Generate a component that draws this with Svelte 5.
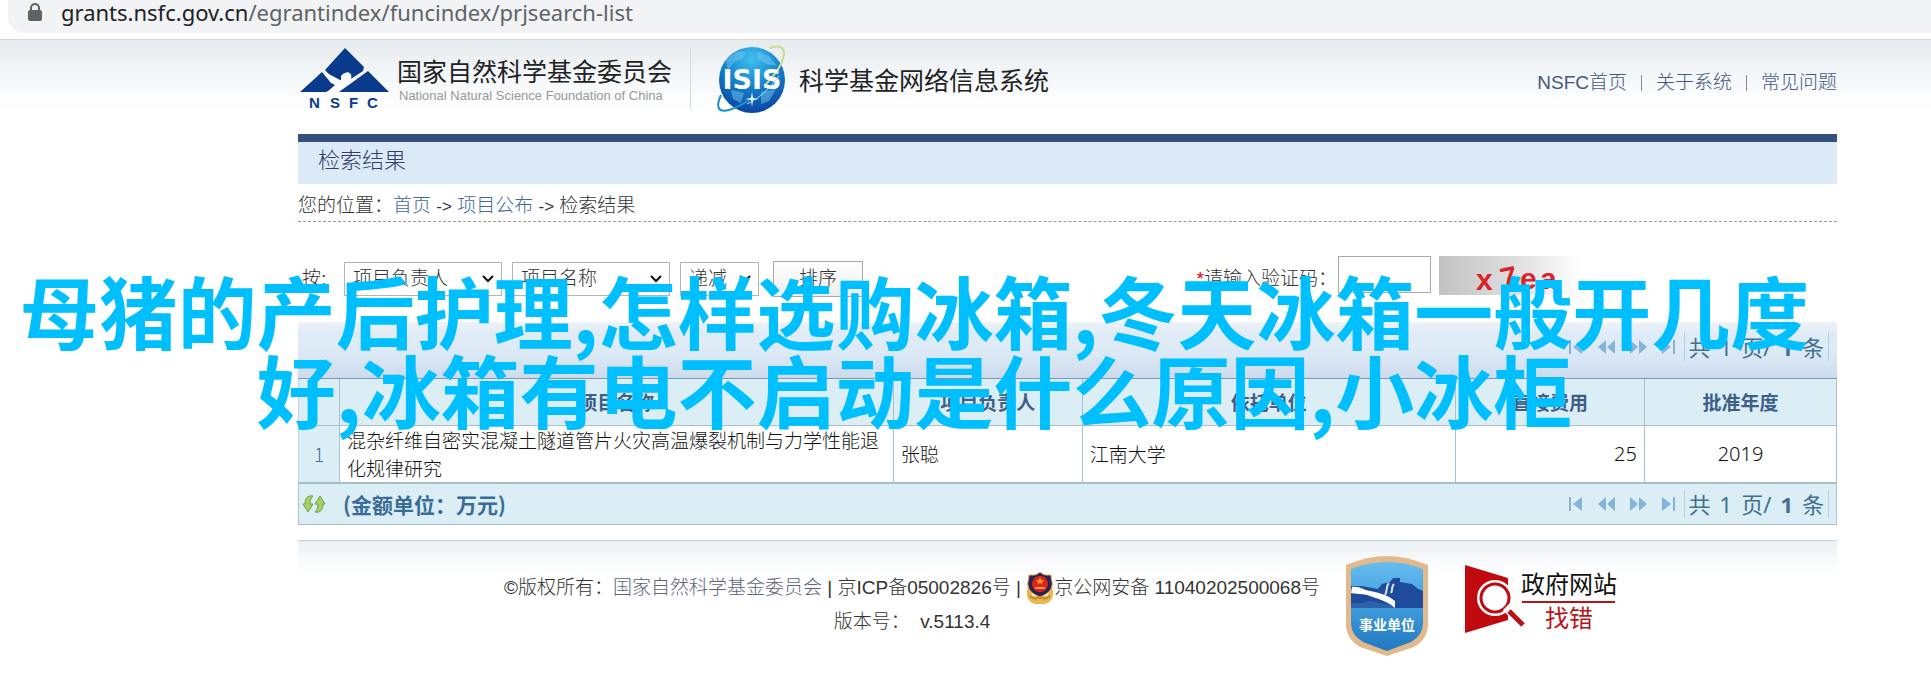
<script>
  const sortFields = ['项目负责人', '申请代码', '批准年度'];
  const nameFields = ['项目名称', '依托单位'];
  const orders = ['递减', '递增'];
  const columns = ['项目名称', '项目负责人', '依托单位', '直接费用', '批准年度'];
  const rows = [
    {
      name: '混杂纤维自密实混凝土隧道管片火灾高温爆裂机制与力学性能退化规律研究',
      leader: '张聪',
      org: '江南大学',
      cost: 25,
      year: 2019
    }
  ];
</script>

{#snippet chevron()}
  <svg class="chevron" viewBox="0 0 14 10" aria-hidden="true"><path d="M2 2l5 5 5-5" /></svg>
{/snippet}

{#snippet pager()}
  <div class="pager">
    <button aria-label="第一页"><svg width="14" height="14" viewBox="0 0 14 14"><path d="M0 0h2v14H0zM13 0v14L4 7z" /></svg></button>
    <button aria-label="上一页"><svg width="17" height="14" viewBox="0 0 17 14"><path d="M8 0v14L0 7zM17 0v14L9 7z" /></svg></button>
    <button aria-label="下一页"><svg width="17" height="14" viewBox="0 0 17 14"><path d="M0 0v14l8-7zM9 0v14l8-7z" /></svg></button>
    <button aria-label="最后一页"><svg width="14" height="14" viewBox="0 0 14 14"><path d="M0 0v14l9-7zM11 0h2v14h-2z" /></svg></button>
    <div class="total"><span>共</span><span>1</span><span>页/</span><b>1</b><span>条</span></div>
  </div>
{/snippet}

<div class="page">
  <div class="browser">
    <div class="address">
      <svg width="14" height="18" viewBox="0 0 14 18" aria-hidden="true">
        <path d="M3 8V5a4 4 0 0 1 8 0v3" fill="none" stroke="#5f6368" stroke-width="2" />
        <rect y="7" width="14" height="11" rx="2" fill="#5f6368" />
      </svg>
      <div class="url">grants.nsfc.gov.cn<span>/egrantindex/funcindex/prjsearch-list</span></div>
    </div>
  </div>

  <div class="site">
    <header>
      <svg class="nsfc" width="89" height="62" viewBox="0 0 89 62" role="img" aria-label="NSFC">
        <g fill="#0a3a8c">
          <path d="M45 0L64 19l-1 4-12 8c2-5-3-8-6-6-4 1-5 5-3 8l-6 1-11-12z" />
          <path d="M0 44L22 24l9 11 4 2-8 7z" />
          <path d="M68 23l21 21H39z" />
        </g>
        <path d="M23 23l11 13 7-3-5 7-10 4h8l15-9 16-12-14 8-11 1" fill="#fff" />
        <circle cx="45" cy="30" r="4" fill="#fff" />
        <g class="letters"><text x="9" y="60">N</text><text x="30" y="60">S</text><text x="49" y="60">F</text><text x="67" y="60">C</text></g>
      </svg>
      <div class="brand">
        <div class="cn">国家自然科学基金委员会</div>
        <div class="en">National Natural Science Foundation of China</div>
      </div>
      <svg class="globe" width="70" height="70" viewBox="0 0 70 70" role="img" aria-label="ISIS">
        <defs>
          <radialGradient id="sea" cx="50%" cy="18%" r="85%">
            <stop offset="0" stop-color="#3fc0ee" />
            <stop offset=".5" stop-color="#1583cd" />
            <stop offset="1" stop-color="#0a3f9e" />
          </radialGradient>
        </defs>
        <circle cx="35" cy="36" r="33" fill="url(#sea)" />
        <path d="M9 17c7-9 14-11 20-9l-4 7-8 3-6 8zM40 8l12 4 8 10-11-2-8-5zM14 46l13 3-3 10-8-4zM44 48l15-3-7 12-8 3z" fill="#7cd0f2" opacity=".45" />
        <path d="M4 51c-5 11-4 18 8 15 8-2 16-7 24-13" fill="none" stroke="#1b8fcf" stroke-width="2" />
        <path d="M53 4c14-5 17 3 11 16-3 6-8 13-15 20" fill="none" stroke="#c5dc8a" stroke-width="2" />
        <text x="35" y="45" text-anchor="middle">ISIS</text>
        <path d="M35 48l1 6 6 1-6 1-1 7-1-7-6-1 6-1z" fill="#fff" />
        <path d="M62 32C52 46 42 54 30 60" fill="none" stroke="#a9e0f7" stroke-width="1" />
      </svg>
      <div class="system">科学基金网络信息系统</div>
      <nav>
        <a href="#home">NSFC首页</a><i></i><a href="#about">关于系统</a><i></i><a href="#faq">常见问题</a>
      </nav>
    </header>

    <h1>检索结果</h1>
    <div class="crumbs">您的位置：<a href="#home">首页</a> <b>-&gt;</b> <a href="#projects">项目公布</a> <b>-&gt;</b> 检索结果</div>

    <form class="filters" onsubmit={(e) => e.preventDefault()}>
      <label class="by" for="field">按:</label>
      <div class="select wide">
        <select id="field">{#each sortFields as o}<option>{o}</option>{/each}</select>{@render chevron()}
      </div>
      <div class="select wide">
        <select aria-label="名称">{#each nameFields as o}<option>{o}</option>{/each}</select>{@render chevron()}
      </div>
      <div class="select narrow">
        <select aria-label="顺序">{#each orders as o}<option>{o}</option>{/each}</select>{@render chevron()}
      </div>
      <button class="sort">排序</button>
      <label class="code" for="code"><em>*</em>请输入验证码：</label>
      <input id="code" type="text" />
      <svg class="captcha" width="150" height="39" viewBox="0 0 150 39" role="img" aria-label="验证码">
        <defs>
          <linearGradient id="fade"><stop offset="0" stop-color="#c2c2c2" /><stop offset=".5" stop-color="#dedede" /><stop offset=".95" stop-color="#fff" /></linearGradient>
        </defs>
        <rect width="150" height="39" fill="url(#fade)" />
        <g class="glyphs"><text x="37" y="34">x</text><text x="62" y="32" transform="rotate(-12 70 24)">7</text><text x="81" y="33">e</text><text x="101" y="33">a</text></g>
      </svg>
    </form>

    <section class="grid">
      <div class="top">{@render pager()}</div>
      <table>
        <colgroup><col class="c0" /><col class="c1" /><col class="c2" /><col class="c3" /><col class="c4" /><col class="c5" /></colgroup>
        <thead>
          <tr><th></th>{#each columns as c}<th>{c}</th>{/each}</tr>
        </thead>
        <tbody>
          {#each rows as r, i}
            <tr>
              <td class="index">{i + 1}</td>
              <td>{r.name}</td>
              <td>{r.leader}</td>
              <td>{r.org}</td>
              <td class="num right">{r.cost}</td>
              <td class="num center">{r.year}</td>
            </tr>
          {/each}
        </tbody>
      </table>
      <div class="bottom">
        <button class="refresh" aria-label="刷新">
          <svg width="24" height="18" viewBox="0 0 24 18">
            <g fill="#a6d068" stroke="#6f9f42" stroke-width="1">
              <path d="M11 1C6 0 3 3 3 9H1l5 8 5-8H8c0-4 1-6 3-8z" />
              <path d="M13 17c5 1 8-2 8-8h2l-5-8-5 8h3c0 4-1 6-3 8z" />
            </g>
          </svg>
        </button>
        <strong>(金额单位：万元)</strong>
        {@render pager()}
      </div>
    </section>

    <footer>
      <div class="legal">
        <div class="line">
          ©版权所有：<a href="#nsfc">国家自然科学基金委员会</a>&nbsp;|&nbsp;京ICP备05002826号&nbsp;|&nbsp;
          <svg width="28" height="32" viewBox="0 0 28 32" aria-hidden="true">
            <path d="M2 15c-3 8 0 15 7 17h10c7-2 10-9 7-17l-5 9H7z" fill="#e9b64f" />
            <path d="M14 0c4 4 8 3 11 3 0 5 2 7 1 11-1 6-7 9-12 11C9 23 3 20 2 14 1 10 3 8 3 3c3 0 7 1 11-3z" fill="#2b2452" stroke="#e3a857" stroke-width="1" />
            <circle cx="14" cy="12" r="8" fill="#dd2415" />
            <path d="M14 5l1 3h3l-2 2 1 2-3-1-3 1 1-2-2-2h3zM9 15h10v2H9z" fill="#f39a3c" />
            <path d="M4 24c4 4 7 3 10 1 3 2 6 3 10-1" fill="none" stroke="#c88a2c" stroke-width="2" />
          </svg>京公网安备&nbsp;11040202500068号
        </div>
        <div class="line">版本号：&nbsp; v.5113.4</div>
      </div>
      <svg class="shield" width="82" height="100" viewBox="0 0 82 100" role="img" aria-label="事业单位">
        <defs>
          <linearGradient id="sky" x2="0" y2="1"><stop offset="0" stop-color="#6cc0f2" /><stop offset=".5" stop-color="#3f9ddd" /><stop offset="1" stop-color="#1f74bd" /></linearGradient>
          <clipPath id="inside"><path d="M5 13Q24 6 41 6t36 7v54q0 12-12 19L41 95 17 86Q5 79 5 67z" /></clipPath>
        </defs>
        <path d="M0 9Q22 0 41 0t41 9v59q0 15-14 23L41 100 14 91Q0 83 0 68z" fill="#e0b98c" />
        <g clip-path="url(#inside)">
          <rect width="82" height="100" fill="url(#sky)" />
          <path d="M0 30h16l16 3 4-5 8-2 3-4h7v4l12 2 6 5 15 5v14H0z" fill="#1f4b9c" />
          <path d="M0 46q14 3 24-1l24 5v2H0z" fill="#2f62ad" />
          <path d="M6 31c8-1 11 3 18 4s18 4 25 10v7c-9-8-18-9-25-12-8-3-12-1-19-3z" fill="#fff" />
          <path d="M43 27c-4 4-1 8-4 12M48 28c-3 3-1 6-3 9" fill="none" stroke="#d9e8f7" stroke-width="2" />
        </g>
        <text x="41" y="74" text-anchor="middle">事业单位</text>
      </svg>
      <svg class="report" width="152" height="70" viewBox="0 0 152 70" role="img" aria-label="政府网站找错">
        <path d="M0 0l43 13v42L0 68z" fill="#c00a10" />
        <circle cx="30" cy="33" r="18" fill="#fff" />
        <circle cx="30" cy="33" r="14" fill="#fff" stroke="#c00a10" stroke-width="3" />
        <path d="M41 42l17 17" stroke="#fff" stroke-width="9" />
        <path d="M44 46l14 14" stroke="#b5141b" stroke-width="5" />
        <text x="56" y="28" fill="#111">政府网站</text>
        <path d="M57 37h93" stroke="#b5141b" stroke-width="2" />
        <text x="80" y="62" fill="#b5141b">找错</text>
      </svg>
    </footer>
  </div>

  <div class="caption"><div>母猪的产后护理,怎样选购冰箱,冬天冰箱一般开几度</div><div>好,冰箱有电不启动是什么原因,小冰柜</div></div>
</div>

<style>
  :global(body) { margin: 0; background: #fff; }
  .page {
    position: relative;
    font: 300 19px/28px "Liberation Sans", "Noto Sans CJK SC", sans-serif;
    color: #333;
  }
  a { color: inherit; text-decoration: none; }
  button { font: inherit; color: inherit; cursor: pointer; }
  .browser { padding-left: 8px; padding-bottom: 6px; }
  .address {
    display: flex;
    align-items: center;
    gap: 19px;
    height: 33px;
    padding: 0 0 10px 20px;
    box-sizing: border-box;
    border-radius: 0 0 0 16px;
    background: #f1f3f4;
  }
  .url { font: 400 22px/22px "Noto Sans", sans-serif; color: #202124; white-space: nowrap; }
  .url span { color: #5f6368; }
  .site {
    padding: 0 94px 0 298px;
    border-top: 1px solid #d3d6d9;
    background: linear-gradient(#e7eaed, #f3f6f9 32px, #fff 70px);
  }
  header { display: flex; align-items: center; height: 94px; padding: 0 0 16px 2px; box-sizing: border-box; }
  .letters { font: 700 15px "Liberation Sans", sans-serif; fill: #0a3a8c; }
  .brand { margin-left: 8px; padding: 6px 18px 0 0; border-right: 1px solid #d5dade; white-space: nowrap; }
  .cn { font: 400 25px/32px "Noto Sans CJK SC", sans-serif; color: #222; }
  .en { font: 400 13px/20px "Liberation Sans", sans-serif; color: #999; padding: 0 0 4px 2px; }
  .globe { margin-left: 26px; flex: none; }
  .globe text { font: 700 27px "DejaVu Sans", sans-serif; fill: #fff; }
  .system { margin-left: 12px; font: 400 25px/36px "Noto Sans CJK SC", sans-serif; color: #222; white-space: nowrap; }
  nav { display: flex; align-items: center; margin-left: auto; padding-top: 8px; color: #45577c; white-space: nowrap; }
  nav i { width: 1px; height: 16px; margin: 0 14px; background: #8089a0; }
  h1 {
    margin: 0;
    padding: 0 0 4px 20px;
    border-top: 8px solid #35507c;
    background: #dceaf7;
    font-size: 22px;
    line-height: 38px;
    font-weight: 300;
    color: #2f3f66;
  }
  .crumbs { padding-top: 8px; border-bottom: 1px dashed #999; }
  .crumbs a { color: #45669c; }
  .crumbs b { font-size: 17px; }
  .filters { display: flex; align-items: flex-end; height: 41px; padding: 34px 0 25px 4px; }
  .by, .code { line-height: 36px; }
  .by { width: 42px; }
  .select { position: relative; margin: 0 10px 1px 0; }
  .wide { width: 158px; }
  .narrow { width: 79px; margin-right: 14px; }
  select {
    display: block;
    width: 100%;
    height: 34px;
    padding: 0 8px;
    appearance: none;
    border: 1px solid #b4b4b4;
    border-radius: 0;
    background: #fff;
    font: inherit;
    color: #333;
  }
  .chevron {
    position: absolute;
    right: 7px;
    top: 12px;
    width: 14px;
    height: 10px;
    fill: none;
    stroke: #111;
    stroke-width: 2;
    pointer-events: none;
  }
  .sort { width: 90px; height: 36px; padding: 0; border: 1px solid #a9a9a9; background: linear-gradient(#fff, #ededed); }
  .code { margin-left: auto; }
  .code em { color: #d00; font-style: normal; }
  input { align-self: flex-start; width: 93px; height: 37px; box-sizing: border-box; margin: 0 8px 0 1px; border: 1px solid #aaa; }
  .captcha { flex: none; align-self: flex-start; margin-right: 248px; }
  .glyphs { font: 700 30px "Liberation Sans", sans-serif; fill: #d8242a; }
  .grid { border-bottom: 1px solid #a3bfcf; }
  .top {
    display: flex;
    align-items: center;
    height: 57px;
    padding: 0 8px 6px 0;
    box-sizing: border-box;
    border-bottom: 1px solid #7c97b0;
    background: linear-gradient(#eef2f9, #dfebf6 12px, #deebf7 26px, #cedbed);
  }
  .pager { display: flex; align-items: center; gap: 15px; margin-left: auto; color: #42708f; }
  .pager button { display: flex; padding: 0; border: 0; background: none; }
  .pager svg { fill: #84b4d8; }
  .total {
    display: flex;
    gap: 9px;
    margin-left: -7px;
    padding: 0 4px;
    border: solid #b5cfdb;
    border-width: 0 1px;
    font: 400 22px/28px "Noto Sans", "Noto Sans CJK SC", sans-serif;
  }
  table {
    width: 100%;
    table-layout: fixed;
    border-collapse: collapse;
    font: 300 19px/28px "Noto Sans CJK SC", sans-serif;
    color: #111;
  }
  .c0 { width: 41px; }
  .c1 { width: 36%; }
  .c2 { width: 189px; }
  .c3 { width: 373px; }
  .c4 { width: 189px; }
  .c5 { width: 192px; }
  th, td { padding: 0 7px; border: 1px solid #a9bfcd; text-align: left; }
  tr > :first-child { border-left-color: #b9d3df; }
  thead th { height: 46px; border-top: 0; background: #dbeef6; color: #3d5f88; font-weight: 700; text-align: center; }
  td { height: 56px; border-bottom: 2px solid #a3bfcb; background: #fff; }
  td.index { background: #dbeef6; color: #42708f; text-align: center; }
  td.num { font-family: "Noto Sans", sans-serif; font-size: 20px; }
  td.right { text-align: right; }
  td.center { text-align: center; }
  .bottom {
    display: flex;
    align-items: center;
    height: 40px;
    padding: 0 7px 0 3px;
    border: solid #a9c6d5;
    border-width: 0 1px;
    background: #dbeef6;
  }
  .refresh { display: flex; padding: 0; border: 0; background: none; }
  strong { margin-left: 17px; font: 700 21px/28px "Noto Sans CJK SC", sans-serif; color: #3a6c96; }
  footer {
    display: flex;
    justify-content: center;
    align-items: flex-start;
    margin-top: 15px;
    padding: 15px 14px 0 0;
    border-top: 1px solid #c3d3da;
    background: linear-gradient(#edf1f4, #fff 34px);
  }
  .legal { margin-right: 26px; padding-top: 15px; text-align: center; }
  .line { display: flex; justify-content: center; align-items: center; height: 34px; white-space: nowrap; }
  .line a { color: #5b6578; }
  .shield text { font: 700 14px "Noto Sans CJK SC", sans-serif; fill: #fff; }
  .report { margin: 9px 0 0 37px; }
  .report text { font: 400 24px "Noto Sans CJK SC", sans-serif; }
  .caption {
    position: absolute;
    top: 270px;
    left: 0;
    right: 102px;
    font: 700 79px/79px "Noto Sans CJK SC", sans-serif;
    color: #00bfff;
    text-align: center;
    white-space: nowrap;
    pointer-events: none;
  }
</style>
